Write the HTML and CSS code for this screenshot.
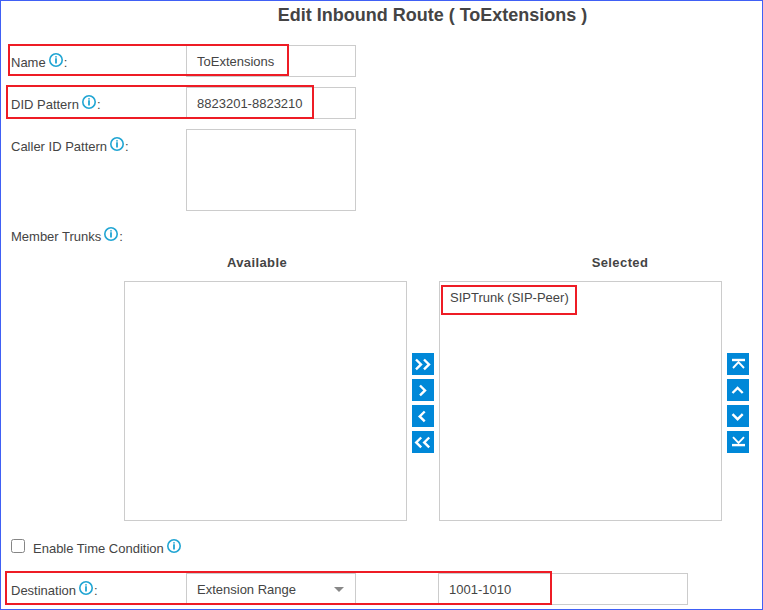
FILE: index.html
```
<!DOCTYPE html>
<html lang="en">
<head>
<meta charset="utf-8">
<title>Edit Inbound Route</title>
<link rel="stylesheet" href="styles.css">
</head>
<body>
<svg class="defs" width="0" height="0">
  <symbol id="info" viewBox="0 0 14 14"><circle cx="7" cy="7" r="6.2" fill="none" stroke="#20a5d3" stroke-width="1.6"/><path d="M7 3.2v1.3M7 5.3v5.2" stroke="#20a5d3" stroke-width="1.8"/></symbol>
</svg>
<main class="page">
  <h1 class="title">Edit Inbound Route ( ToExtensions )</h1>

  <div class="row">
    <div class="label"><span>Name</span><svg class="info"><use href="#info"/></svg><span>:</span></div>
    <div class="field">ToExtensions</div>
    <i class="mark mark-name"></i>
  </div>
  <div class="row">
    <div class="label"><span>DID Pattern</span><svg class="info"><use href="#info"/></svg><span>:</span></div>
    <div class="field">8823201-8823210</div>
    <i class="mark mark-did"></i>
  </div>
  <div class="row">
    <div class="label"><span>Caller ID Pattern</span><svg class="info"><use href="#info"/></svg><span>:</span></div>
    <div class="field area"></div>
  </div>
  <div class="row trunks">
    <div class="label"><span>Member Trunks</span><svg class="info"><use href="#info"/></svg><span>:</span></div>
  </div>

  <div class="transfer">
    <section class="column">
      <h2 class="heading available">Available</h2>
      <div class="list"></div>
    </section>
    <div class="buttons">
      <button class="btn"><svg viewBox="0 0 22 22"><path d="M4 6.5l5 4.9-5 4.9M12 6.5l5 4.9-5 4.9"/></svg></button>
      <button class="btn"><svg viewBox="0 0 22 22"><path d="M8 6.5l5 4.9-5 4.9"/></svg></button>
      <button class="btn"><svg viewBox="0 0 22 22"><path d="M12.7 6.5l-5 4.9 5 4.9"/></svg></button>
      <button class="btn"><svg viewBox="0 0 22 22"><path d="M9.2 6.5l-5 4.9 5 4.9M17.2 6.5l-5 4.9 5 4.9"/></svg></button>
    </div>
    <section class="column">
      <h2 class="heading selected">Selected</h2>
      <div class="list">
        <div class="item">SIPTrunk (SIP-Peer)</div>
        <i class="mark mark-trunk"></i>
      </div>
    </section>
    <div class="buttons">
      <button class="btn"><svg viewBox="0 0 22 22"><path d="M5 7h13"/><path class="thin" d="M6 15l5.5-5.9L17 15"/></svg></button>
      <button class="btn"><svg viewBox="0 0 22 22"><path d="M5.5 14l5.1-5 5.1 5"/></svg></button>
      <button class="btn"><svg viewBox="0 0 22 22"><path d="M5.5 9.2l5.1 5 5.1-5"/></svg></button>
      <button class="btn"><svg viewBox="0 0 22 22"><path d="M5 14.1h13"/><path class="thin" d="M6 6.1l5.5 5.7L17 6.1"/></svg></button>
    </div>
  </div>

  <div class="condition">
    <input class="check" type="checkbox" aria-label="Enable Time Condition">
    <div class="label"><span>Enable Time Condition</span><svg class="info"><use href="#info"/></svg></div>
  </div>

  <div class="row">
    <div class="label"><span>Destination</span><svg class="info"><use href="#info"/></svg><span>:</span></div>
    <div class="field select"><span>Extension Range</span><i class="caret"></i></div>
    <div class="field range">1001-1010</div>
    <i class="mark mark-dest"></i>
  </div>
</main>
</body>
</html>
```
FILE: styles.css
```
* { box-sizing: border-box; }
body { margin: 0; background: #fff; color: #444; font: 13px/16px "Liberation Sans", Arial, sans-serif; }
.defs { position: absolute; }
.page { width: 763px; height: 610px; border: 1px solid #4060f5; padding: 0 10px; overflow: hidden; }
.title { margin: 0 0 20px; padding-top: 2px; height: 24px; font-size: 18px; line-height: 24px; text-align: center; white-space: nowrap; position: relative; left: 51px; }
.row { display: flex; position: relative; margin-bottom: 10px; }
.label { display: flex; width: 175px; height: 32px; padding-top: 10px; white-space: nowrap; }
.info { width: 14px; height: 14px; margin: -2px 1px 0 3px; flex: none; }
.field { width: 170px; height: 32px; border: 1px solid #ccc; padding: 8px 10px; white-space: nowrap; }
.area { height: 82px; }
.trunks { margin: -2px 0 0; height: 24px; }
.transfer { display: flex; margin-left: 113px; height: 278px; }
.column { width: 283px; flex: none; }
.heading { margin: 0; height: 38px; padding-top: 12px; font-size: 13px; line-height: 16px; text-align: center; letter-spacing: .4px; }
.available { padding-right: 17px; }
.selected { padding-left: 79px; }
.list { position: relative; height: 240px; border: 1px solid #ccc; padding: 8px 10px; }
.buttons { display: flex; flex: none; flex-direction: column; gap: 4px; width: 32px; padding: 110px 5px 0; }
.btn { width: 22px; height: 22px; padding: 0; border: 0; background: #0088d8; }
.btn svg { display: block; width: 22px; height: 22px; fill: none; stroke: #fff; stroke-width: 2.4; }
.btn .thin { stroke-width: 1.9; }
.condition { display: flex; height: 52px; }
.check { appearance: none; width: 14px; height: 14px; margin: 18px 8px 0 0; border: 1px solid #858585; border-radius: 2.5px; background: #fff; }
.condition .label { padding-top: 20px; height: 52px; }
.select { display: flex; justify-content: space-between; }
.caret { width: 0; height: 0; margin: 5px 1px 0 0; border: 5px solid transparent; border-top-color: #888; border-bottom: 0; }
.range { width: 250px; margin-left: 82px; }
.mark { position: absolute; border: 2px solid #ee1c25; pointer-events: none; }
.mark-name { left: -3px; top: -1px; width: 281px; height: 32px; }
.mark-did { left: -5px; top: -2px; width: 308px; height: 34px; }
.mark-trunk { left: 1px; top: 3px; width: 136px; height: 30px; }
.mark-dest { left: -6px; top: -2px; width: 547px; height: 34px; }
```
